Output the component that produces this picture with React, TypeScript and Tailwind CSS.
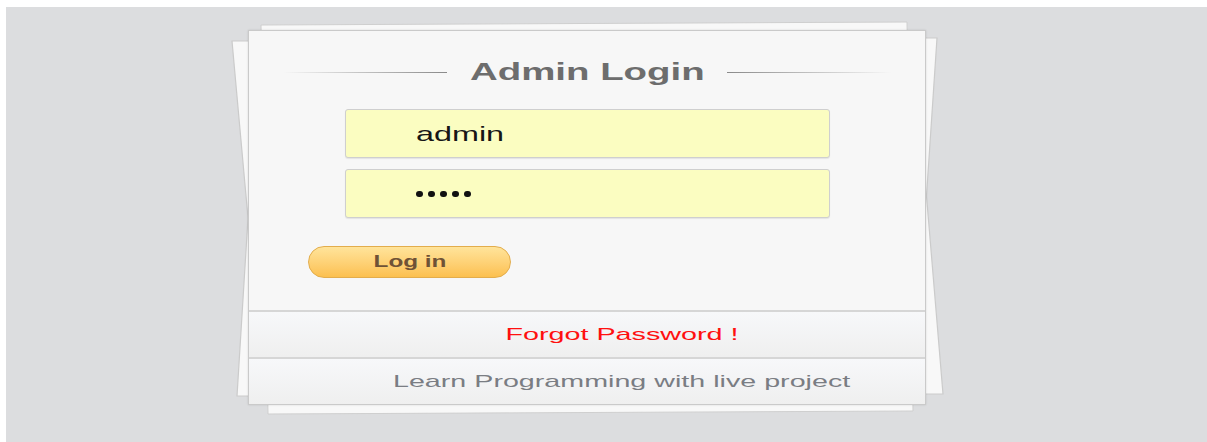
import React from "react";

// Sheets of paper peeking out from behind the login card.
function PaperStack() {
  return (
    <svg
      className="pointer-events-none absolute left-[-20px] top-[-12px]"
      width={720}
      height={410}
      viewBox="228 18 720 410"
    >
      <polygon points="261,25 907,22 913,411 268,414" fill="#f8f8f8" stroke="#cfcfcf" strokeWidth={1} />
      <polygon points="232,41 252,41 252,396 237,396 248,218" fill="#f8f8f8" stroke="#cbcbcb" strokeWidth={1.2} />
      <polygon points="922,38 937,38 926.5,196 943,394 922,394" fill="#f8f8f8" stroke="#cbcbcb" strokeWidth={1.2} />
    </svg>
  );
}

function Field({ children }: { children: React.ReactNode }) {
  return (
    <div className="mx-auto flex h-[49px] w-[485px] items-center rounded-[3px] border border-[#cfcfcf] bg-[#fbfdc1] pl-[70px] shadow-[0_1px_1px_rgba(0,0,0,0.08)]">
      {children}
    </div>
  );
}

export default function App() {
  return (
    <div className="h-[442px] w-[1207px] bg-white pl-[6px] pt-[7px] font-['Liberation_Sans',Arial,sans-serif]">
      <div className="h-full bg-[#dcdddf] pl-[242px] pt-[23px]">
        <div className="relative w-[678px]">
          <PaperStack />
          <div className="relative border border-[#cacaca] bg-[#f7f7f7] shadow-[0_0_2px_rgba(0,0,0,0.12)]">
            {/* heading with fading rules */}
            <div className="mt-[29px] flex h-[24px] items-center px-[34px]">
              <div className="h-px flex-1 bg-gradient-to-r from-transparent to-[#8a8a8a]" />
              <div className="flex w-[280px] justify-center">
                <span className="inline-block scale-x-[1.6] text-[24px] font-bold leading-[24px] text-[#6d6d6d]">
                  Admin Login
                </span>
              </div>
              <div className="h-px flex-1 bg-gradient-to-r from-[#8a8a8a] to-transparent" />
            </div>

            <div className="mt-[25px]">
              <Field>
                <span className="inline-block origin-left scale-x-[1.54] text-[21px] leading-[21px] text-[#161616]">
                  admin
                </span>
              </Field>
            </div>
            <div className="mt-[11px]">
              <Field>
                <div className="flex gap-[5px] pt-[-2px]">
                  <span className="h-[6px] w-[7px] rounded-full bg-[#111]" />
                  <span className="h-[6px] w-[7px] rounded-full bg-[#111]" />
                  <span className="h-[6px] w-[7px] rounded-full bg-[#111]" />
                  <span className="h-[6px] w-[7px] rounded-full bg-[#111]" />
                  <span className="h-[6px] w-[7px] rounded-full bg-[#111]" />
                </div>
              </Field>
            </div>

            <div className="mb-[32px] mt-[28px] pl-[59px]">
              <button className="flex h-[32px] w-[203px] items-center justify-center rounded-full border border-[#e3ad4c] bg-gradient-to-b from-[#ffe49a] to-[#fcc04f]">
                <span className="inline-block scale-x-[1.52] text-[16px] font-bold leading-[16px] text-[#6f5236]">
                  Log in
                </span>
              </button>
            </div>

            <div className="flex h-[47px] items-center justify-center border-t-2 border-[#d6d6d6] bg-gradient-to-b from-[#f7f8fa] to-[#efefef] pl-[69px]">
              <span className="inline-block scale-x-[1.69] text-[17px] leading-[17px] text-[#ff1010]">
                Forgot Password !
              </span>
            </div>
            <div className="flex h-[47px] items-center justify-center border-t-2 border-[#d6d6d6] bg-gradient-to-b from-[#f7f8fa] to-[#efefef] pl-[69px]">
              <span className="inline-block scale-x-[1.686] text-[17px] leading-[17px] text-[#7a7d83]">
                Learn Programming with live project
              </span>
            </div>
          </div>
        </div>
      </div>
    </div>
  );
}
